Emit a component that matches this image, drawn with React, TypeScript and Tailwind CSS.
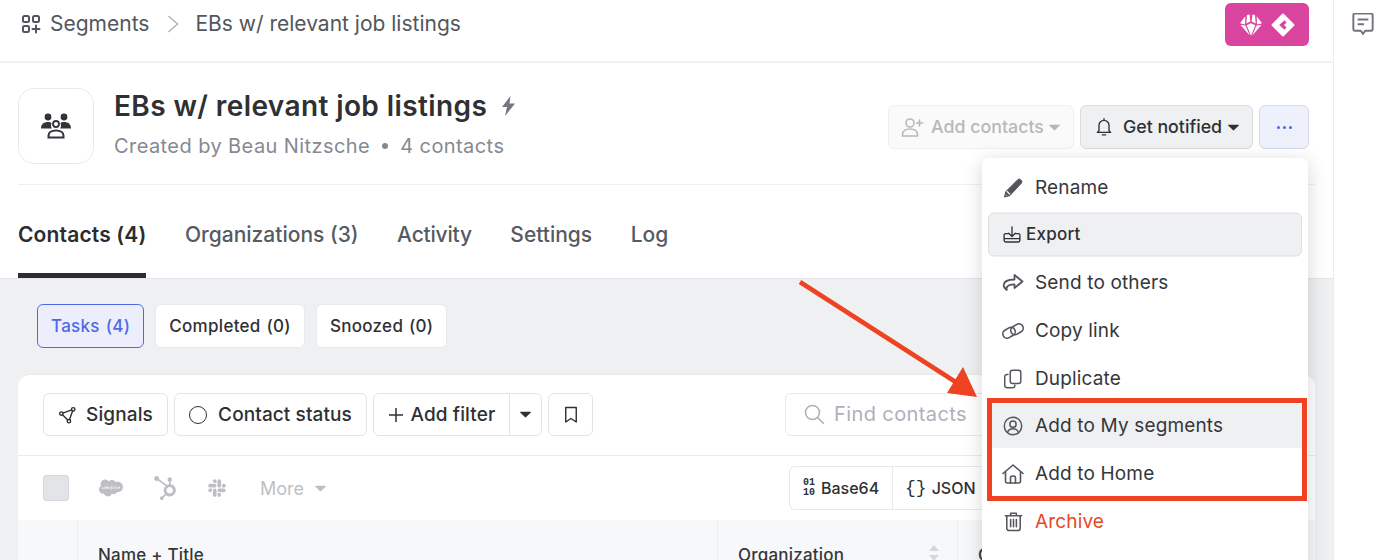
import React from "react";
import { FaSalesforce, FaHubspot, FaSlack } from "react-icons/fa";

const S = (p: React.SVGProps<SVGSVGElement>) => (
  <svg fill="none" stroke="currentColor" strokeWidth={1.6} strokeLinecap="round" strokeLinejoin="round" viewBox="0 0 24 24" {...p} />
);

const Caret = ({ className }: { className: string }) => (
  <svg viewBox="0 0 12 7" className={className} fill="currentColor"><path d="M0.6 0.5h10.800a.5.5 0 0 1 .4.8L6.400 6.600a.5.5 0 0 1-.8 0L.2 1.300a.5.5 0 0 1 .4-.8z" /></svg>
);

const menuIcons: Record<string, React.ReactNode> = {
  rename: (
    <svg viewBox="0 0 24 24" className="w-[24px] h-[24px]" fill="none" strokeLinejoin="round">
      <path d="M3.500 21l1.400-5.400L16.800 3.700a2 2 0 0 1 2.800 0l.7.7a2 2 0 0 1 0 2.800L8.900 19.600z" fill="currentColor" stroke="currentColor" strokeWidth={1} />
      <path d="M5.800 15.200l3.200 3.200" stroke="#fff" strokeWidth={1.300} />
      <path d="M4.900 19.800l.4-1.400 1 1z" fill="#fff" />
    </svg>
  ),
  share: (
    <S className="w-[24px] h-[24px]" strokeWidth={1.8}><path d="M13.500 4l8 6.500-8 6.500v-3.700c-4 0-6.300.7-7.400 2.500-.6 1-.6 2.200-.3 3.200-2.300-1.500-3.300-3.300-3-5.500.4-3 3.700-4.800 10.700-5z" /></S>
  ),
  link: (
    <S className="w-[24px] h-[24px]"><rect x="1.500" y="9.500" width="13" height="8.500" rx="4.200" transform="rotate(-30 8 13.700)" /><rect x="9.500" y="6" width="13" height="8.500" rx="4.200" transform="rotate(-30 16 10.300)" /></S>
  ),
  dup: (
    <S className="w-[22px] h-[22px]"><rect x="9" y="2.500" width="11.500" height="14.500" rx="2.500" /><path d="M6.500 7H5.500A2.500 2.500 0 0 0 3 9.500V19a2.500 2.500 0 0 0 2.500 2.500h6A2.500 2.500 0 0 0 14 19v-.5" /></S>
  ),
  user: (
    <S className="w-[22px] h-[22px]"><circle cx="12" cy="12" r="9.500" /><circle cx="12" cy="10" r="3.400" /><path d="M6 19c1-2.800 3.200-4 6-4s5 1.200 6 4" /></S>
  ),
  home: (
    <S className="w-[26px] h-[26px]"><path d="M2 11.500L12 3l10 8.500" /><path d="M4.500 10v9a2 2 0 0 0 2 2h11a2 2 0 0 0 2-2v-9" /><path d="M9.500 21v-5a2 2 0 0 1 2-2h1a2 2 0 0 1 2 2v5" /></S>
  ),
  trash: (
    <S className="w-[23px] h-[23px]"><path d="M3.500 6h17M9 6V3.500h6V6" /><path d="M5 6v13a2.500 2.500 0 0 0 2.500 2.500h9A2.500 2.500 0 0 0 19 19V6" /><path d="M9 10v7.500M12 10v7.500M15 10v7.500" /></S>
  ),
};

const MenuItem = ({ icon, label, className = "", textClass = "" }: { icon: string; label: string; className?: string; textClass?: string }) => (
  <div className={`flex items-center h-[44px] shrink-0 mx-[6px] pl-[13px] ${className}`}>
    <span className="w-[24px] flex justify-center text-[#52555c]">{menuIcons[icon]}</span>
    <span className={`ml-[10px] text-[19px] tracking-[0.15px] ${textClass}`}>{label}</span>
  </div>
);

const Tab = ({ label, active, textClass = "" }: { label: string; active?: boolean; textClass?: string }) => (
  <div className={`h-full flex items-center pt-[12px] text-[21px] border-b-[5px] ${active ? "font-semibold text-[#2b2c2f] border-[#2e2e2e] tracking-[0.15px]" : "font-medium text-[#565a62] border-transparent"} ${textClass}`}>{label}</div>
);

const Chip = ({ children, active }: { children: React.ReactNode; active?: boolean }) => (
  <div className={`h-[44px] flex items-center rounded-md text-[17px] font-medium tracking-[0.3px] [word-spacing:1px] px-[13px] pt-[1px] ${active ? "bg-[#eceefc] border border-[#4f69e6] text-[#4f69e6]" : "bg-white border border-[#e8e9ec] text-[#2f3034]"}`}>{children}</div>
);

const Btn = ({ children, className = "" }: { children: React.ReactNode; className?: string }) => (
  <div className={`h-[43px] flex items-center bg-white border border-[#e2e4e8] rounded-md text-[19px] font-medium tracking-[0.1px] text-[#2f3034] ${className}`}>{children}</div>
);

export default function App() {
  return (
    <div className="relative w-[1378px] h-[560px] overflow-hidden bg-white flex font-['Inter',sans-serif] text-[#36373b]">
      <div className="w-[1334px] flex flex-col shrink-0 border-r border-[#ececee]">
        {/* top bar */}
        <div className="h-[63px] border-b-2 border-[#f0f1f2] flex items-start pl-[22px] pr-[24px] shrink-0">
          <div className="flex items-center h-[48px] text-[21px] text-[#53565d]">
            <S className="w-[20px] h-[20px] -ml-[1px]" strokeWidth={2} viewBox="0 0 20 20"><rect x="2" y="2" width="6" height="6" rx="1.500" /><rect x="12" y="2" width="6" height="6" rx="1.500" /><rect x="2" y="12" width="6" height="6" rx="1.500" /><path d="M15 11.500v7M11.500 15h7" /></S>
            <span className="ml-[9px]">Segments</span>
            <svg viewBox="0 0 12 20" className="w-[12px] h-[20px] ml-[18px] text-[#b1b3b8]" fill="none" stroke="currentColor" strokeWidth={1.400}><path d="M1.500 2l9 8-9 8" /></svg>
            <span className="ml-[16px]">EBs w/ relevant job listings</span>
          </div>
          <div className="ml-auto mt-[3px] w-[84px] h-[43px] rounded-md bg-[#d9449f] flex items-center justify-center gap-[8px] text-white">
            <svg viewBox="0 0 24 24" className="w-[24px] h-[24px]" fill="currentColor">
              <path d="M8 2l2.600-.4L11.300 8.500 7.300 10.500zM16 2l-2.600-.4L12.700 8.500l4 2zM6.300 3.200L1 10.200l5 1.200zM17.700 3.200L23 10.200l-5 1.200zM1.500 12l5 .6L10.800 22.500zM22.500 12l-5 .6L13.200 22.500zM12 10.300l-4.300 2L12 22.800l4.300-10.500z" />
            </svg>
            <svg viewBox="0 0 24 24" className="w-[24px] h-[24px]"><path d="M12 1.500L22.500 12 12 22.500 1.500 12z" fill="currentColor" stroke="currentColor" strokeWidth={2} strokeLinejoin="round" /><path d="M14.500 8.500L10.500 12l4 3.500" fill="none" stroke="#d9449f" strokeWidth={3} /></svg>
          </div>
        </div>

        {/* title */}
        <div className="mx-[18px] pt-[25px] h-[122px] border-b border-[#eeeff1] flex items-start shrink-0">
          <div className="w-[76px] h-[76px] rounded-[16px] border border-[#e8e9ec] flex items-center justify-center text-[#33343a]">
            <svg viewBox="0 0 32 26" className="w-[32px] h-[26px]" fill="currentColor">
              <circle cx="8" cy="4" r="3.400" /><circle cx="24" cy="4" r="3.400" />
              <path d="M1 15.500c0-4.500 3-6.500 7-6.500 1.500 0 2.500.3 3.500 1a6 6 0 0 0 .3 5.500zM31 15.500c0-4.500-3-6.500-7-6.500-1.500 0-2.500.3-3.500 1a6 6 0 0 1-.3 5.500z" />
              <circle cx="16" cy="11" r="3" fill="none" stroke="currentColor" strokeWidth={1.800} />
              <path d="M8.500 24.500v-2c0-3 3-5 7.500-5s7.500 2 7.500 5v2z" fill="none" stroke="currentColor" strokeWidth={2} />
            </svg>
          </div>
          <div className="ml-[20px] -mt-[1px]">
            <div className="flex items-center h-[38px]">
              <span className="text-[28px] font-semibold text-[#2f3033] tracking-[0.4px]">EBs w/ relevant job listings</span>
              <svg viewBox="0 0 16 20" className="w-[16px] h-[20px] ml-[13px] text-[#74777f]" fill="currentColor"><path d="M10.500 0L2 11h5l-2 9 10-12.500H9.500z" /></svg>
            </div>
            <div className="flex items-center mt-[6px] text-[20px] text-[#858993] tracking-[0.42px]">
              <span>Created by Beau Nitzsche</span>
              <span className="w-[6px] h-[6px] rounded-full bg-[#858993] mx-[12px]" />
              <span>4 contacts</span>
            </div>
          </div>
          <div className="ml-auto mt-[17px] flex gap-[6px] mr-[6px]">
            <div className="h-[44px] w-[186px] pr-[2px] flex items-center justify-center bg-[#fafafa] border border-[#f0f0f1] rounded-md text-[17.800px] font-medium text-[#b7b8ba]">
              <S className="w-[24px] h-[24px]"><circle cx="10" cy="8" r="4" /><path d="M2.500 21v-1.500c0-3.500 3.200-5.500 7.500-5.500s7.500 2 7.500 5.500V21zM19.500 5v6M16.500 8h6" /></S>
              <span className="ml-[7px]">Add contacts</span>
              <Caret className="w-[11px] h-[7px] ml-[5px]" />
            </div>
            <div className="h-[44px] w-[173px] flex items-center justify-center bg-[#eff0f2] border border-[#dadce0] rounded-md text-[17.800px] font-medium text-[#2f3033]">
              <S className="w-[20px] h-[20px]"><path d="M6 16.500V10a6 6 0 0 1 12 0v6.500l2 2H4zM10 21.500h4M12 2v1.500" /></S>
              <span className="ml-[9px]">Get notified</span>
              <Caret className="w-[11px] h-[7px] ml-[6px]" />
            </div>
            <div className="h-[44px] w-[50px] flex items-center justify-center gap-[3px] bg-[#eef0fc] border border-[#d6daee] rounded-md">
              <span className="w-[3px] h-[3px] rounded-full bg-[#4f69e6]" />
              <span className="w-[3px] h-[3px] rounded-full bg-[#4f69e6]" />
              <span className="w-[3px] h-[3px] rounded-full bg-[#4f69e6]" />
            </div>
          </div>
        </div>

        {/* tabs */}
        <div className="h-[93px] mx-[18px] flex items-stretch gap-[38.500px] shrink-0">
          <Tab label="Contacts (4)" active />
          <Tab label="Organizations (3)" />
          <Tab label="Activity" textClass="tracking-[-0.2px]" />
          <Tab label="Settings" />
          <Tab label="Log" />
        </div>

        {/* body */}
        <div className="flex-1 bg-[#eff0f2] border-t border-[#e4e5e8] pt-[25px] pl-[18px] pr-[18px] min-h-0">
          <div className="flex gap-[11px] pl-[19px]">
            <Chip active>Tasks (4)</Chip>
            <Chip>Completed (0)</Chip>
            <Chip>Snoozed (0)</Chip>
          </div>
          <div className="mt-[26px] bg-white rounded-t-[12px] border-t border-[#e8e9ec] h-[300px]">
            <div className="h-[81px] border-b border-[#e9eaec] pl-[25px] pt-[18px] flex items-start gap-[6px]">
              <Btn className="w-[125px] justify-center pt-[1px]">
                <svg viewBox="0 0 20 20" className="w-[19px] h-[19px]" fill="none" stroke="currentColor" strokeWidth={1.500} strokeLinejoin="round"><path d="M3.500 8L16 3.500 11.500 16z" /><circle cx="3.500" cy="8" r="1.800" fill="#fff" /><circle cx="16" cy="3.500" r="1.800" fill="#fff" /><circle cx="11.500" cy="16" r="1.800" fill="#fff" /></svg>
                <span className="ml-[9px]">Signals</span>
              </Btn>
              <Btn className="w-[193px] justify-center pt-[1px]">
                <span className="w-[18px] h-[18px] rounded-full border-[1.600px] border-[#2f3034]" />
                <span className="ml-[11px]">Contact status</span>
              </Btn>
              <Btn className="w-[169px]">
                <span className="flex items-center justify-center w-[135px] pt-[1px]">
                  <svg viewBox="0 0 16 16" className="w-[16px] h-[16px]" stroke="currentColor" strokeWidth={1.500}><path d="M8 1v14M1 8h14" /></svg>
                  <span className="ml-[7px]">Add filter</span>
                </span>
                <span className="flex-1 h-full border-l border-[#e2e4e8] flex items-center justify-center"><Caret className="w-[11px] h-[7px]" /></span>
              </Btn>
              <Btn className="w-[45px] justify-center">
                <svg viewBox="0 0 16 20" className="w-[14px] h-[18px]" fill="none" stroke="currentColor" strokeWidth={1.600} strokeLinejoin="round"><path d="M2 1.500h12V18l-6-4-6 4z" /></svg>
              </Btn>
              <div className="ml-[186px] w-[500px] h-[43px] flex items-center border border-[#e8e9ec] rounded-md pl-[16px] pb-[1px] text-[#aeb1b9]">
                <S className="w-[24px] h-[24px]"><circle cx="10.500" cy="10.500" r="7" /><path d="M15.500 15.500l6 6" /></S>
                <span className="ml-[8px] text-[20px] tracking-[0.4px]">Find contacts</span>
              </div>
            </div>
            <div className="h-[64px] pl-[25px] flex items-center">
              <span className="w-[26px] h-[26px] rounded-[3px] bg-[#e2e4e8] border border-[#d6d8dc]" />
              <FaSalesforce className="ml-[30px] w-[24px] h-[24px] text-[#bdbfc3]" />
              <FaHubspot className="ml-[30px] w-[24px] h-[24px] text-[#bdbfc3]" />
              <FaSlack className="ml-[30px] w-[20px] h-[20px] text-[#bdbfc3]" />
              <span className="ml-[33px] text-[18px] text-[#bdbfc3]">More</span>
              <Caret className="ml-[11px] w-[11px] h-[7px] text-[#bdbfc3]" />
              <div className="ml-[463px] h-[44px] flex items-center border border-[#e8e9ec] rounded-md w-[400px] text-[16px] font-medium text-[#2f3034]">
                <span className="w-[103px] h-full flex items-center justify-center border-r border-[#e8e9ec] gap-[6px]">
                  <span className="text-[10px] leading-[10px] font-['Liberation_Mono',monospace] font-bold">01<br />10</span>
                  Base64
                </span>
                <span className="pl-[12px] flex items-center gap-[5px]"><span className="font-['Liberation_Mono',monospace] text-[18px]">{"{}"}</span>JSON</span>
              </div>
            </div>
            <div className="h-[60px] bg-[#f7f8fa] flex text-[17px] tracking-[0.2px] text-[#36373b] font-medium">
              <div className="w-[60px] border-r border-[#eceef0]" />
              <div className="w-[640px] border-r border-[#eceef0] pl-[20px] pt-[23px] whitespace-nowrap">Name + Title</div>
              <div className="w-[240px] border-r border-[#eceef0] pl-[20px] pt-[23px] flex items-start whitespace-nowrap">
                <span>Organization</span>
                <svg viewBox="0 0 12 18" className="ml-[84px] mt-[1px] w-[12px] h-[18px] text-[#d5d7db]" fill="currentColor"><path d="M6 1l5 6H1zM6 17l5-6H1z" /></svg>
              </div>
              <div className="pl-[20px] pt-[23px]">C</div>
            </div>
          </div>
        </div>
      </div>

      {/* right rail */}
      <div className="flex-1 flex justify-start pt-[13px] pl-[18px] text-[#71747c]">
        <svg viewBox="2 1.500 20 20.500" className="w-[22px] h-[22px]" fill="none" stroke="currentColor" strokeWidth={1.800} strokeLinejoin="round"><path d="M3 3.500a1.500 1.500 0 0 1 1.500-1.500h15A1.500 1.500 0 0 1 21 3.500v13a1.500 1.500 0 0 1-1.500 1.500H14l-2 3-2-3H4.500A1.500 1.500 0 0 1 3 16.500z" /><path d="M7 7.500h10M7 12h6" /></svg>
      </div>

      {/* dropdown menu */}
      <div className="absolute left-[982px] top-[158px] w-[326px] h-[420px] bg-white rounded-md shadow-[0_4px_20px_rgba(0,0,0,0.16)] pt-[8px] flex flex-col gap-[3.700px] text-[#36373b]">
        <MenuItem icon="rename" label="Rename" />
        <div className="flex items-center h-[44px] shrink-0 mx-[6px] pl-[13px] -translate-y-[1.500px] bg-[#eff0f2] border border-[#dcdde1] rounded-md text-[#2f3034]">
          <S className="w-[20px] h-[20px]"><path d="M12 3v11M8 10.500l4 4 4-4M7 11H4.500A2 2 0 0 0 2.500 13v6a2 2 0 0 0 2 2h15a2 2 0 0 0 2-2v-6a2 2 0 0 0-2-2H17M3 17h18" /></S>
          <span className="ml-[4px] text-[17px] font-medium tracking-[0.25px]">Export</span>
        </div>
        <MenuItem icon="share" label="Send to others" />
        <MenuItem icon="link" label="Copy link" />
        <MenuItem icon="dup" label="Duplicate" />
        <MenuItem icon="user" label="Add to My segments" className="bg-[#eff0f2]" />
        <MenuItem icon="home" label="Add to Home" />
        <MenuItem icon="trash" label="Archive" textClass="text-[#e8472a]" />
      </div>

      {/* annotations */}
      <div className="absolute left-[987px] top-[398px] w-[320px] h-[103px] border-[5px] border-[#ee4223]" />
      <svg className="absolute left-[795px] top-[275px] w-[190px] h-[130px]" viewBox="0 0 190 130">
        <path d="M5 7L170 113" stroke="#ee4223" strokeWidth={4.500} />
        <path d="M182 122L152 118L168 92z" fill="#ee4223" />
      </svg>
    </div>
  );
}
